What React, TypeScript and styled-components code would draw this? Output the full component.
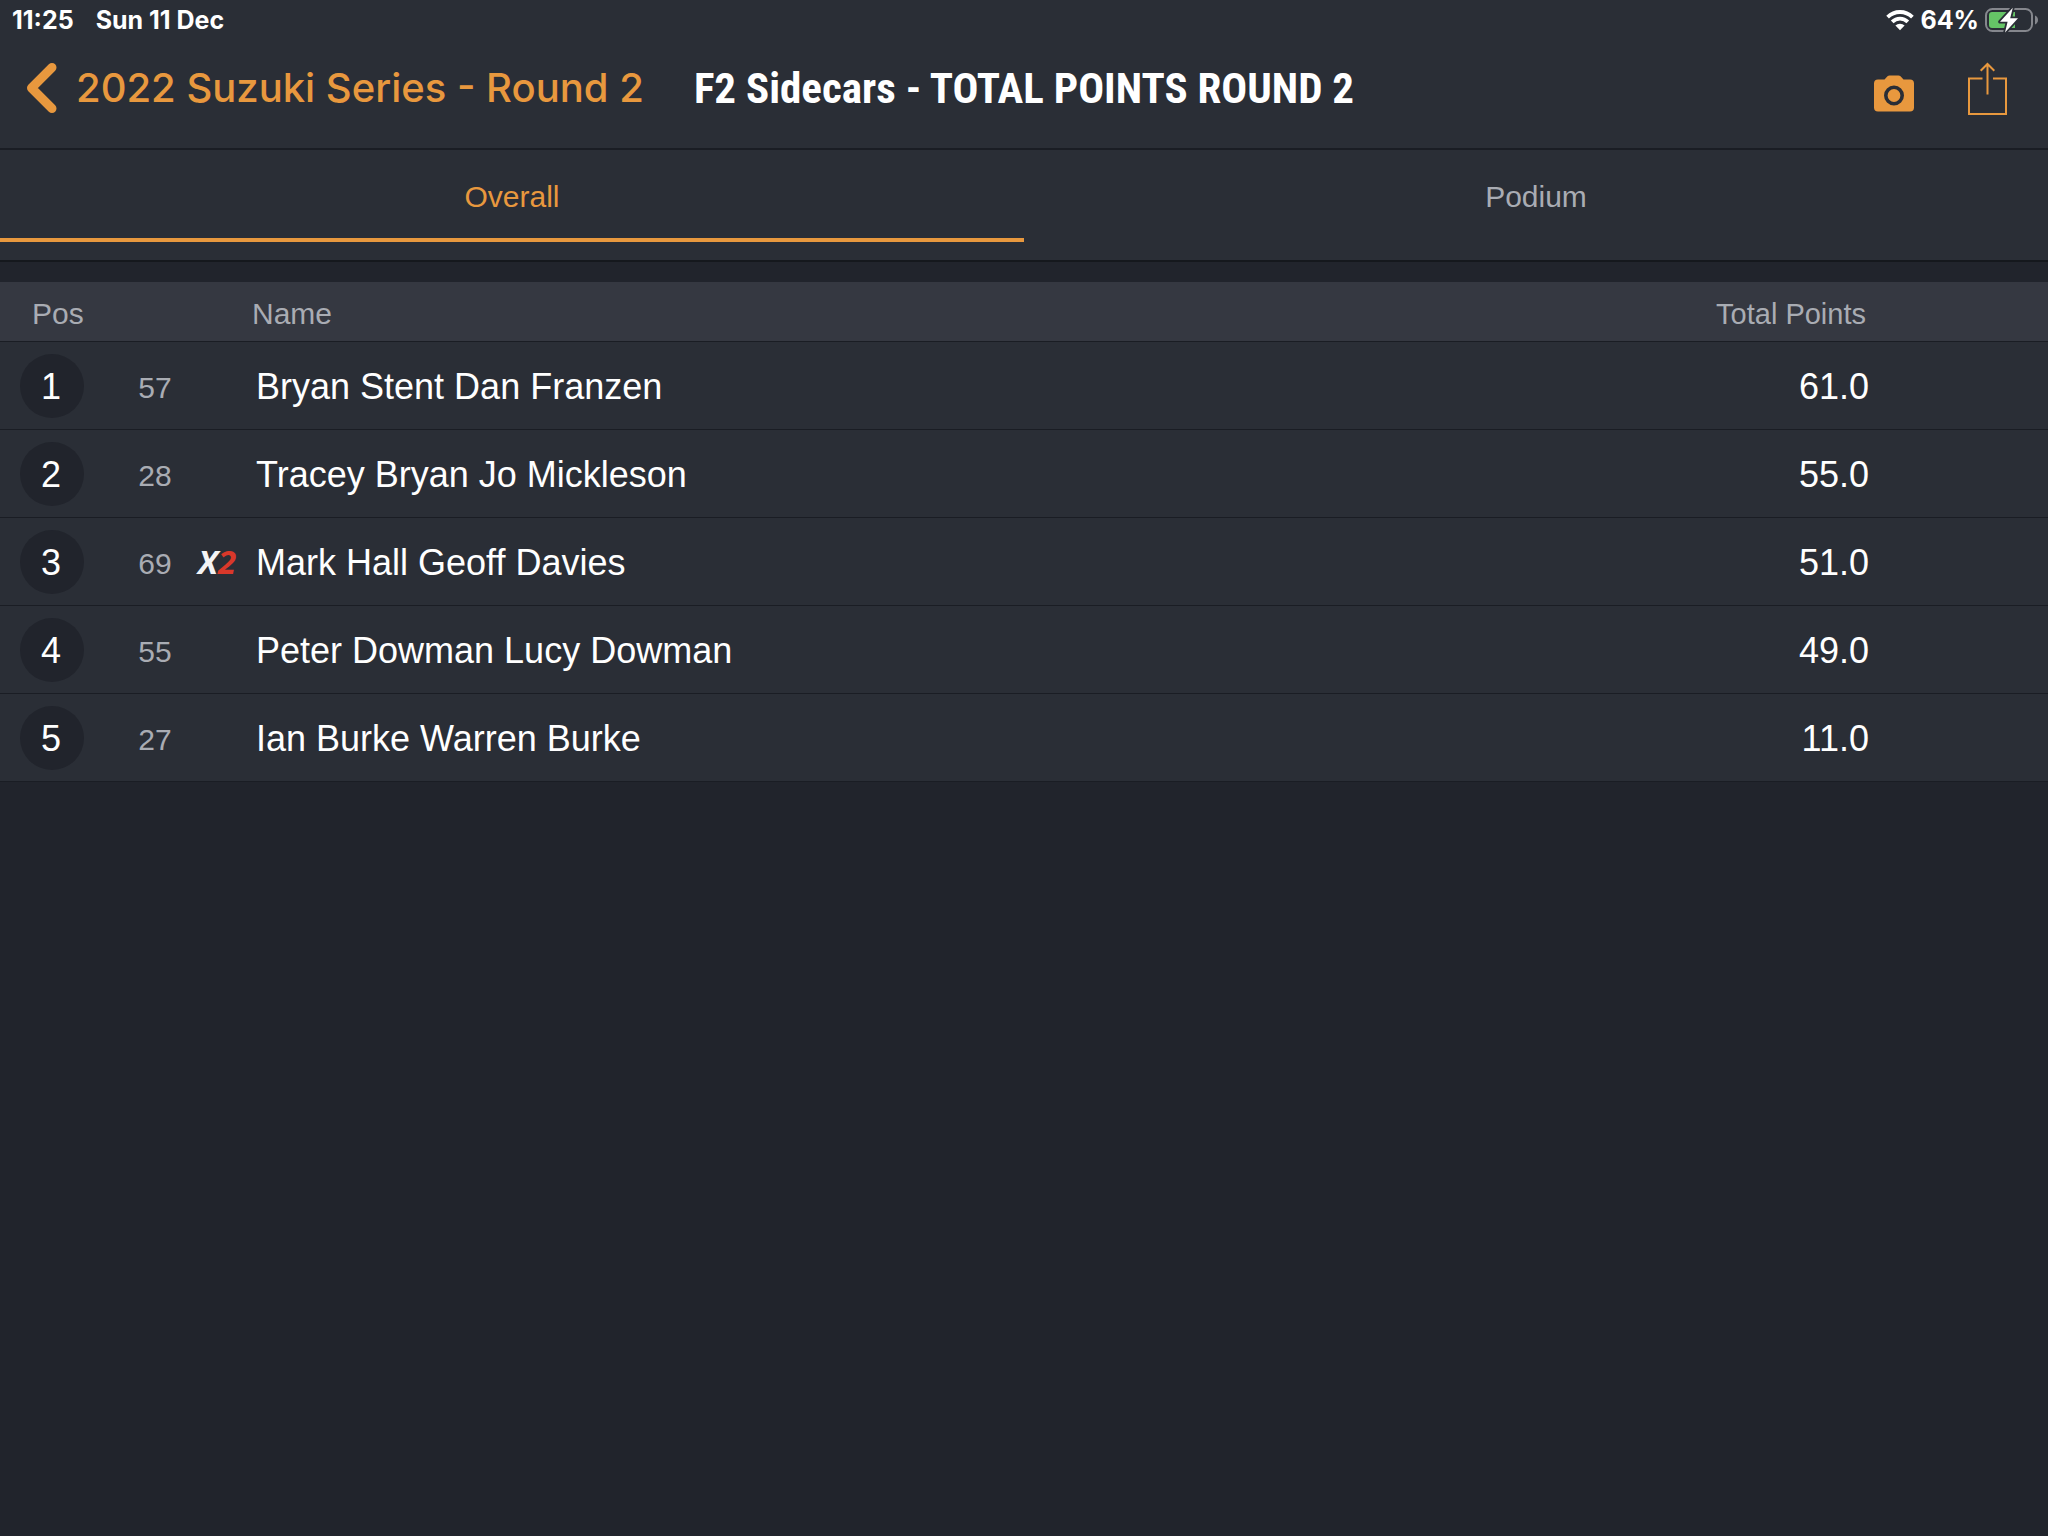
import React, { useState } from "react";
import styled, { createGlobalStyle } from "styled-components";

const color = {
  page: "#21242c",
  bar: "#2a2e36",
  head: "#353841",
  line: "#1a1d24",
  edge: "#15181d",
  accent: "#e8983e",
  muted: "#a9acb3",
  text: "#ffffff",
};

const GlobalStyle = createGlobalStyle`
  * { box-sizing: border-box; }
  body {
    margin: 0;
    background: ${color.page};
    color: ${color.text};
    font-family: "Liberation Sans", Arial, sans-serif;
  }
`;

const Header = styled.header`
  background: ${color.bar};
  border-bottom: 2px solid ${color.line};
`;

const StatusBar = styled.div`
  display: flex;
  align-items: center;
  justify-content: space-between;
  height: 40px;
  padding: 0 8px 0 12px;
  font: 700 25px/32px Inter, sans-serif;
`;

const StatusGroup = styled.div<{ $gap: number }>`
  display: flex;
  align-items: center;
  gap: ${(p) => p.$gap}px;
`;

const NavBar = styled.nav`
  display: grid;
  grid-template-columns: 1fr auto 1fr;
  align-items: center;
  padding: 20px 40px 32px 24px;
`;

const PlainButton = styled.button`
  display: flex;
  align-items: center;
  margin: 0;
  padding: 0;
  border: 0;
  background: none;
  color: ${color.accent};
  cursor: pointer;
`;

const BackButton = styled(PlainButton)`
  gap: 16px;
  font: 500 40px/56px Inter, sans-serif;
  white-space: nowrap;
`;

const Title = styled.h1`
  margin: 0;
  padding-left: 16px;
  font: 700 43px/56px "Roboto Condensed", "Arial Narrow", sans-serif;
  white-space: nowrap;
`;

const Actions = styled.div`
  display: flex;
  justify-content: flex-end;
  gap: 53px;
`;

const TabStrip = styled.div`
  display: flex;
  padding-bottom: 18px;
  background: ${color.bar};
  border-bottom: 2px solid ${color.edge};
`;

const Tab = styled.button<{ $active: boolean }>`
  flex: 1;
  height: 92px;
  margin: 0;
  padding: 6px 0 0;
  border: 0;
  border-bottom: 4px solid ${(p) => (p.$active ? color.accent : "transparent")};
  background: none;
  color: ${(p) => (p.$active ? color.accent : color.muted)};
  font: 400 30px/36px "Liberation Sans", Arial, sans-serif;
  cursor: pointer;
`;

const Table = styled.table`
  width: 100%;
  margin-top: 20px;
  border-collapse: separate;
  border-spacing: 0;
  table-layout: fixed;
`;

const Col = styled.col<{ $width?: number }>`
  width: ${(p) => (p.$width ? `${p.$width}px` : "auto")};
`;

const HeadCell = styled.th<{ $left?: number; $right?: number; $small?: boolean }>`
  height: 60px;
  padding: 4px ${(p) => p.$right ?? 0}px 0 ${(p) => p.$left ?? 0}px;
  background: ${color.head};
  border-bottom: 1px solid ${color.line};
  color: ${color.muted};
  font-size: ${(p) => (p.$small ? 29 : 30)}px;
  font-weight: 400;
  line-height: 36px;
  text-align: ${(p) => (p.$right ? "right" : "left")};
`;

const Cell = styled.td`
  height: 88px;
  padding: 2px 0 0;
  background: ${color.bar};
  border-bottom: 1px solid ${color.line};
  font-size: 36px;
  line-height: 44px;
`;

const PosCell = styled(Cell)`
  padding: 0 0 0 20px;
`;

const Position = styled.span`
  display: flex;
  align-items: center;
  justify-content: center;
  width: 64px;
  height: 64px;
  padding: 2px 2px 0 0;
  border-radius: 50%;
  background: ${color.page};
`;

const NumberCell = styled(Cell)`
  padding-top: 4px;
  color: ${color.muted};
  font-size: 30px;
  text-align: center;
`;

const LogoCell = styled(Cell)`
  padding: 0 0 0 4px;
`;

const NameCell = styled(Cell)`
  padding-left: 4px;
`;

const PointsCell = styled(Cell)`
  padding-right: 179px;
  text-align: right;
`;

const Logo = styled.span`
  display: block;
  color: #f4f4f5;
  font: italic 700 33px/42px "Open Sans", sans-serif;
`;

const LogoTwo = styled.span`
  color: #d9382a;
`;

const WifiIcon = () => (
  <svg width="28" height="22" viewBox="0 0 28 22" aria-label="Wi-Fi" role="img">
    <g fill="none" stroke="#fff" strokeWidth="3.8">
      <path d="M1.6 8.1a17.6 17.6 0 0 1 24.8 0" />
      <path d="M6.2 12.9a11 11 0 0 1 15.6 0" />
    </g>
    <path d="M14 21.2l-4.6-4.6a6.6 6.6 0 0 1 9.2 0z" fill="#fff" />
  </svg>
);

const BatteryIcon = () => (
  <svg width="55" height="26" viewBox="0 0 55 26" aria-label="Charging" role="img">
    <rect x="1" y="2" width="46" height="22" rx="6.5" fill="none" stroke="#85878d" strokeWidth="2" />
    <path d="M50 8.6c2 .8 3 2.5 3 4.4s-1 3.6-3 4.4z" fill="#85878d" />
    <path d="M7 5h23v16H7a3 3 0 0 1-3-3V8a3 3 0 0 1 3-3z" fill="#65c466" />
    <path
      d="M27.8.8L15 14.8h7.6L20 25.4 33 11.2h-7.8z"
      fill="#fff"
      stroke={color.bar}
      strokeWidth="3.6"
      strokeLinejoin="round"
      paintOrder="stroke"
    />
  </svg>
);

const ChevronIcon = () => (
  <svg width="36" height="52" viewBox="0 0 36 52" aria-hidden="true">
    <path d="M28 5.5L7.5 26 28 46.5" fill="none" stroke={color.accent} strokeWidth="9" strokeLinecap="round" strokeLinejoin="round" />
  </svg>
);

const CameraIcon = () => (
  <svg width="42" height="54" viewBox="0 0 42 54" aria-hidden="true">
    <path
      d="M5 18.5h6.5l3-3.3q.8-.7 2-.7h9q1.2 0 2 .7l3 3.3H37a4 4 0 0 1 4 4v24a4 4 0 0 1-4 4H5a4 4 0 0 1-4-4v-24a4 4 0 0 1 4-4z"
      fill={color.accent}
    />
    <circle cx="21" cy="34.5" r="8.2" fill="none" stroke={color.bar} strokeWidth="3.6" />
  </svg>
);

const ShareIcon = () => (
  <svg width="40" height="54" viewBox="0 0 40 54" aria-hidden="true">
    <g fill="none" stroke={color.accent} strokeWidth="2">
      <path d="M14.5 17.5H1V53h37V17.500H25" />
      <path d="M19.500 33.500V3M12.700 9.800L19.500 3l6.800 6.800" />
    </g>
  </svg>
);

type Entry = { number: string; name: string; points: string; x2?: boolean };

const entries: Entry[] = [
  { number: "57", name: "Bryan Stent Dan Franzen", points: "61.0" },
  { number: "28", name: "Tracey Bryan Jo Mickleson", points: "55.0" },
  { number: "69", name: "Mark Hall Geoff Davies", points: "51.0", x2: true },
  { number: "55", name: "Peter Dowman Lucy Dowman", points: "49.0" },
  { number: "27", name: "Ian Burke Warren Burke", points: "11.0" },
];

const tabs = ["Overall", "Podium"];

export default function App() {
  const [active, setActive] = useState(tabs[0]);

  return (
    <>
      <GlobalStyle />
      <Header>
        <StatusBar>
          <StatusGroup $gap={22}>
            <span>11:25</span>
            <span>Sun 11 Dec</span>
          </StatusGroup>
          <StatusGroup $gap={6}>
            <WifiIcon />
            <span>64%</span>
            <BatteryIcon />
          </StatusGroup>
        </StatusBar>
        <NavBar>
          <BackButton type="button">
            <ChevronIcon />
            2022 Suzuki Series - Round 2
          </BackButton>
          <Title>F2 Sidecars - TOTAL POINTS ROUND 2</Title>
          <Actions>
            <PlainButton type="button" aria-label="Take photo">
              <CameraIcon />
            </PlainButton>
            <PlainButton type="button" aria-label="Share">
              <ShareIcon />
            </PlainButton>
          </Actions>
        </NavBar>
      </Header>
      <TabStrip role="tablist">
        {tabs.map((tab) => (
          <Tab
            key={tab}
            type="button"
            role="tab"
            aria-selected={tab === active}
            $active={tab === active}
            onClick={() => setActive(tab)}
          >
            {tab}
          </Tab>
        ))}
      </TabStrip>
      <Table>
        <colgroup>
          <Col $width={116} />
          <Col $width={78} />
          <Col $width={58} />
          <Col />
          <Col $width={400} />
        </colgroup>
        <thead>
          <tr>
            <HeadCell scope="col" $left={32}>Pos</HeadCell>
            <HeadCell scope="col" aria-label="Number" />
            <HeadCell scope="col" aria-label="Transponder" />
            <HeadCell scope="col">Name</HeadCell>
            <HeadCell scope="col" $right={182} $small>Total Points</HeadCell>
          </tr>
        </thead>
        <tbody>
          {entries.map((entry, index) => (
            <tr key={entry.number}>
              <PosCell>
                <Position>{index + 1}</Position>
              </PosCell>
              <NumberCell>{entry.number}</NumberCell>
              <LogoCell>
                {entry.x2 && (
                  <Logo>
                    X<LogoTwo>2</LogoTwo>
                  </Logo>
                )}
              </LogoCell>
              <NameCell>{entry.name}</NameCell>
              <PointsCell>{entry.points}</PointsCell>
            </tr>
          ))}
        </tbody>
      </Table>
    </>
  );
}
